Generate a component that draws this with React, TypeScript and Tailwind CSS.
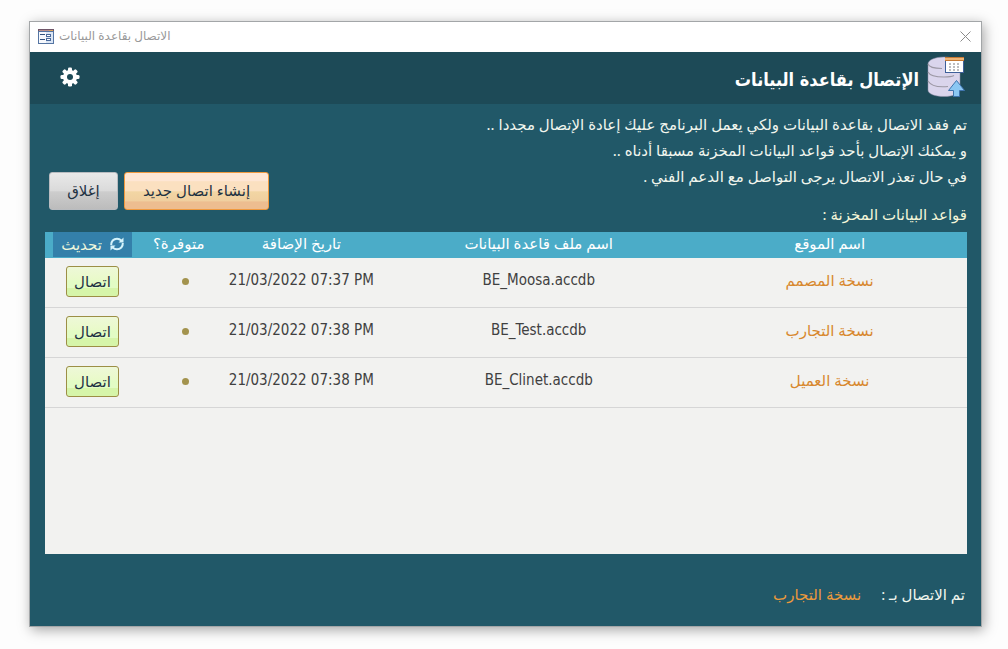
import React from 'react';

type Database = { site: string; file: string; added: string };

const databases: Database[] = [
  { site: 'نسخة المصمم', file: 'BE_Moosa.accdb', added: '21/03/2022 07:37 PM' },
  { site: 'نسخة التجارب', file: 'BE_Test.accdb', added: '21/03/2022 07:38 PM' },
  { site: 'نسخة العميل', file: 'BE_Clinet.accdb', added: '21/03/2022 07:38 PM' },
];

function FormIcon() {
  return (
    <svg width="16" height="15" viewBox="0 0 16 15" shapeRendering="crispEdges" aria-hidden="true">
      <rect width="16" height="15" fill="#5575a3" />
      <rect width="16" height="2" fill="#6f5568" />
      <rect x="1" y="1" width="10" height="1" fill="#b98f8c" />
      <rect x="11" y="1" width="4" height="1" fill="#d9a35c" />
      <rect x="1" y="3" width="14" height="11" fill="#dbe6f5" />
      <rect x="1" y="3" width="7" height="11" fill="#f7f9fd" />
      <path d="M2 5h5v1H2zM2 10h5v1H2z" fill="#33527f" />
      <path d="M8 5h5v3H8zM8 9h5v3H8z" fill="#4b6a9b" />
      <path d="M9 6h3v1H9zM9 10h3v1H9z" fill="#ffffff" />
    </svg>
  );
}

function GearIcon() {
  return (
    <svg width="20" height="20" viewBox="0 0 20 20" aria-hidden="true">
      <g fill="#ffffff">
        <circle cx="10" cy="10" r="7" />
        <rect x="8" y="0.5" width="4" height="19" rx="1.3" />
        <rect x="8" y="0.5" width="4" height="19" rx="1.3" transform="rotate(45 10 10)" />
        <rect x="8" y="0.5" width="4" height="19" rx="1.3" transform="rotate(90 10 10)" />
        <rect x="8" y="0.5" width="4" height="19" rx="1.3" transform="rotate(135 10 10)" />
      </g>
      <circle cx="10" cy="10" r="3" fill="#1d4a57" />
    </svg>
  );
}

function DatabaseIcon() {
  return (
    <svg width="38" height="42" viewBox="0 0 38 42" aria-hidden="true">
      <path d="M1 8C1 4 8 1 17 1s16 3 16 7v26c0 4-7 6.500-16 6.500S1 38 1 34z" fill="#dad5ec" stroke="#8f8da6" strokeWidth="0.5" />
      <g fill="none" stroke="#9c98a4" strokeWidth="1.1">
        <path d="M1 8c1 3 6 4.500 14 4.500" />
        <path d="M1 16c2 4 9 5 16 5 5 0 8-0.500 10-1.500" />
        <path d="M1 25c3 5 10 6.500 20 5.500" />
      </g>
      <rect x="18.500" y="1.500" width="18" height="15" fill="#ffffff" stroke="#3e5f99" />
      <rect x="18" y="1" width="19" height="4" fill="#f0b678" />
      <path d="M18 1.500h19M18 4.500h19" stroke="#c67a35" />
      <path
        d="M22 7h2v2h-2zM26 7h2v2h-2zM30 7h2v2h-2zM22 10h2v2h-2zM26 10h2v2h-2zM30 10h2v2h-2zM22 13h2v2h-2zM26 13h2v2h-2zM30 13h2v2h-2z"
        fill="#bdbdc0"
      />
      <path d="M29.500 24.500l8 10h-5v6h-6v-6h-5z" fill="#8bc7f3" stroke="#3f74ae" />
    </svg>
  );
}

function RefreshIcon() {
  return (
    <svg width="14" height="14" viewBox="0 0 14 14" aria-hidden="true">
      <g fill="none" stroke="#d5f3fb" strokeWidth="2">
        <path d="M1.200 8C1 4.500 3.500 1.700 7 1.700c1.800 0 3 0.500 4.300 1.800" />
        <path d="M12.800 6C13 9.500 10.500 12.300 7 12.300c-1.800 0-3-0.500-4.300-1.800" />
      </g>
      <path d="M13.500 0.500v5H8.500zM0.500 13.500v-5h5z" fill="#d5f3fb" />
    </svg>
  );
}

export default function App() {
  return (
    <div
      dir="rtl"
      className="flex min-h-screen flex-col bg-[#fdfdfd] pt-[21px] pr-[26px] pb-[22px] pl-[29px] font-['Noto_Sans','DejaVu_Sans',sans-serif] text-[15px]"
    >
      <main className="flex flex-1 flex-col border border-[#a3a6a8] bg-[#215868] shadow-[2px_3px_12px_rgba(0,0,0,0.35)]">
        <div className="flex h-[30px] items-center justify-between bg-white px-2 pb-0.5">
          <button type="button" aria-label="إغلاق النافذة" className="p-0.5">
            <svg width="11" height="11" viewBox="0 0 11 11" aria-hidden="true">
              <path d="M0.500 0.500l10 10M10.500 0.500l-10 10" stroke="#8b8b8b" strokeWidth="1" />
            </svg>
          </button>
          <div className="flex items-center gap-[5px] text-[12px] leading-5 text-[#999999]">
            <span>الاتصال بقاعدة البيانات</span>
            <FormIcon />
          </div>
        </div>

        <header className="flex h-[52px] items-center justify-between bg-[#1d4a57] pr-4 pb-[3px] pl-[30px]">
          <div className="flex items-center gap-2">
            <DatabaseIcon />
            <h1 className="pt-1.5 font-['DejaVu_Sans_Condensed','DejaVu_Sans',sans-serif] text-[18px] leading-8 font-bold text-white">
              الإتصال بقاعدة البيانات
            </h1>
          </div>
          <button type="button" aria-label="الإعدادات">
            <GearIcon />
          </button>
        </header>

        <section className="flex flex-1 flex-col px-[14px] pt-[7px] pl-[15px]">
          <div className="flex items-end justify-between pb-[5px] pl-1">
            <div className="leading-[26px] text-[#f1f6ee]">
              <p>تم فقد الاتصال بقاعدة البيانات ولكي يعمل البرنامج عليك إعادة الإتصال مجددا ..</p>
              <p>و يمكنك الإتصال بأحد قواعد البيانات المخزنة مسبقا أدناه ..</p>
              <p>في حال تعذر الاتصال يرجى التواصل مع الدعم الفني .</p>
              <h2 className="mt-3 text-[#f4f6d8]">قواعد البيانات المخزنة :</h2>
            </div>
            <div className="mb-[17px] flex gap-1.5 text-[#1f3242]">
              <button
                type="button"
                className="h-[38px] w-[145px] rounded-[3px] border border-[#f0993e] bg-[linear-gradient(#fee6d4_0%,#fee6d4_22%,#fbe0c0_24%,#fbe0c0_50%,#f2d6a4_52%,#f0cf9f_78%,#edbd90_80%,#edbd90_100%)] pb-0.5"
              >
                إنشاء اتصال جديد
              </button>
              <button
                type="button"
                className="h-[38px] w-[69px] rounded-[3px] border border-[#b9bcc0] bg-[linear-gradient(#e9e9e9_0%,#dadada_50%,#cdcdcd_52%,#bcbcbc_100%)] pb-0.5"
              >
                إغلاق
              </button>
            </div>
          </div>

          <div className="flex-1 bg-[#f2f2f0]">
            <table className="w-full table-fixed border-separate border-spacing-0 text-center">
              <colgroup>
                <col className="w-[29.800%]" />
                <col className="w-[33.300%]" />
                <col className="w-[18.200%]" />
                <col className="w-[8.400%]" />
                <col className="w-[10.300%]" />
              </colgroup>
              <thead className="bg-[#4bacc8] text-white">
                <tr className="h-[26px]">
                  <th className="p-0 align-top leading-[22px] font-normal">اسم الموقع</th>
                  <th className="p-0 align-top leading-[22px] font-normal">اسم ملف قاعدة البيانات</th>
                  <th className="p-0 align-top leading-[22px] font-normal">تاريخ الإضافة</th>
                  <th className="p-0 align-top leading-[22px] font-normal">متوفرة؟</th>
                  <th className="p-0 pr-2 pl-2 align-top leading-[22px] font-normal">
                    <button
                      type="button"
                      className="flex h-[25px] w-full items-center justify-center gap-2 bg-[#3480aa] pb-0.5 text-[#eef7dc]"
                    >
                      <RefreshIcon />
                      <span>تحديث</span>
                    </button>
                  </th>
                </tr>
              </thead>
              <tbody className="text-[#404040]">
                {databases.map((db) => (
                  <tr key={db.file} className="h-[50px]">
                    <td className="border-b border-[#d6d6d6] p-0 pb-1 text-[#d8882e]">{db.site}</td>
                    <td
                      dir="ltr"
                      className="border-b border-[#d6d6d6] p-0 pb-1 font-['DejaVu_Sans_Condensed','DejaVu_Sans',sans-serif]"
                    >
                      {db.file}
                    </td>
                    <td
                      dir="ltr"
                      className="border-b border-[#d6d6d6] p-0 pb-1 font-['DejaVu_Sans_Condensed','DejaVu_Sans',sans-serif]"
                    >
                      {db.added}
                    </td>
                    <td className="border-b border-[#d6d6d6] p-0 pl-3.5">
                      <span className="mx-auto mb-0.5 block size-[7px] rounded-full bg-[#a3934d]" />
                    </td>
                    <td className="border-b border-[#d6d6d6] p-0 pb-0.5">
                      <button
                        type="button"
                        className="mx-auto block h-[31px] w-[53px] rounded-[3px] border border-[#9c8f45] bg-[linear-gradient(#eef8d8_0%,#e9fac9_45%,#e2fcc4_47%,#e2fcc4_72%,#d6f5a9_74%,#d6f5a9_100%)] text-[#1f3242]"
                      >
                        اتصال
                      </button>
                    </td>
                  </tr>
                ))}
              </tbody>
            </table>
          </div>

          <footer className="flex h-[72px] items-center gap-5 pt-2 pr-0.5 text-[#f1f6ee]">
            <span>تم الاتصال بـ :</span>
            <span className="text-[#eb9a3c]">نسخة التجارب</span>
          </footer>
        </section>
      </main>
    </div>
  );
}
